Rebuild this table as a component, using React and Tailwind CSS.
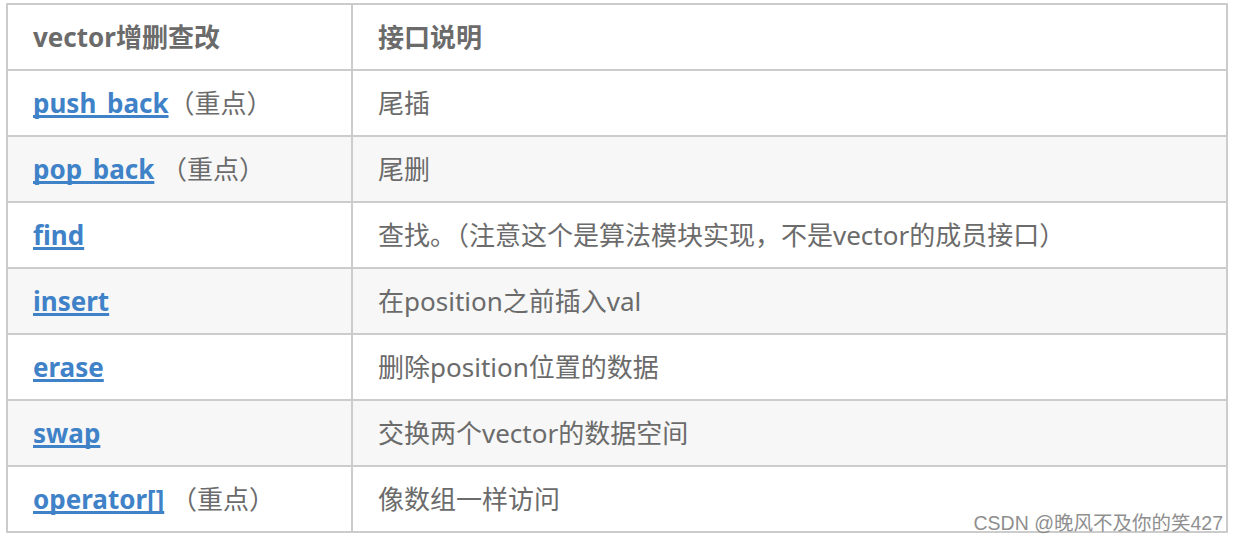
import React from "react"

const rows = [
    { api: "push_back", note: "（重点）", desc: "尾插" },
    { api: "pop_back", note: " （重点）", desc: "尾删" },
    { api: "find", note: "", desc: "查找。（注意这个是算法模块实现，不是vector的成员接口）" },
    { api: "insert", note: "", desc: "在position之前插入val" },
    { api: "erase", note: "", desc: "删除position位置的数据" },
    { api: "swap", note: "", desc: "交换两个vector的数据空间" },
    { api: "operator[]", note: " （重点）", desc: "像数组一样访问" },
]

export default function App() {
    return (
        <div
            className="relative w-[1238px] h-[544px] bg-white overflow-hidden pl-[6px] pt-[3px]"
            style={{ fontFamily: '"Noto Sans", "Open Sans", "Noto Sans CJK SC", sans-serif' }}
        >
            <table className="border-collapse w-[1222px] text-[26px] text-[#6b6b6b]">
                <thead>
                    <tr className="h-[66px] bg-white">
                        <th className="w-[345px] border-2 border-[#cccccc] px-[25px] text-left font-bold">vector增删查改</th>
                        <th className="border-2 border-[#cccccc] px-[25px] text-left font-bold">接口说明</th>
                    </tr>
                </thead>
                <tbody>
                    {rows.map((row, i) => (
                        <tr key={row.api} className={`h-[66px] ${i % 2 === 1 ? "bg-[#f7f7f7]" : "bg-white"}`}>
                            <td className="border-2 border-[#cccccc] px-[25px] whitespace-pre">
                                <a href="#" className="font-bold text-[#3f82c8] underline decoration-[3px] underline-offset-[2px] [text-decoration-skip-ink:none]">{row.api}</a>
                                {row.note}
                            </td>
                            <td className="border-2 border-[#cccccc] px-[25px]">{row.desc}</td>
                        </tr>
                    ))}
                </tbody>
            </table>

            {/* watermark */}
            <div
                className="absolute right-[15px] bottom-[11px] text-[19.5px] leading-none text-[#8f8f8f]"
                style={{ fontFamily: '"Liberation Sans", "Noto Sans CJK SC", sans-serif' }}
            >
                CSDN @晚风不及你的笑427
            </div>
        </div>
    )
}
